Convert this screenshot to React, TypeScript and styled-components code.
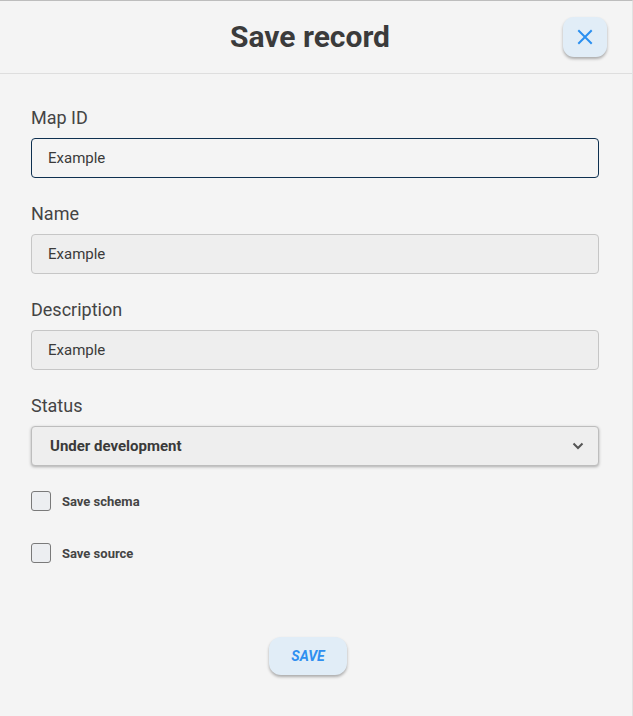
import React from "react";
import styled, { createGlobalStyle } from "styled-components";

const GlobalStyle = createGlobalStyle`
  html, body {
    margin: 0;
    padding: 0;
    background: #f4f4f4;
  }
  body {
    font-family: Roboto, "Liberation Sans", sans-serif;
  }
`;

const Dialog = styled.div`
  width: 633px;
  height: 716px;
  box-sizing: border-box;
  background: #f4f4f4;
  border-top: 1px solid #bdbdbd;
  border-right: 1px solid #e2e2e2;
  display: flex;
  flex-direction: column;
`;

const Header = styled.header`
  display: grid;
  grid-template-columns: 44px 1fr 44px;
  align-items: center;
  height: 72px;
  padding: 0 25px 0 13px;
  border-bottom: 1px solid #dedede;
`;

const Title = styled.h1`
  grid-column: 2;
  margin: 0 0 1px;
  text-align: center;
  font-size: 30px;
  font-weight: 700;
  color: #3b3b3b;
`;

const IconButton = styled.button`
  grid-column: 3;
  width: 44px;
  height: 40px;
  border: none;
  border-radius: 11px;
  background: #e1edf7;
  box-shadow: 0 2px 3px rgba(0, 0, 0, 0.3);
  display: flex;
  align-items: center;
  justify-content: center;
  padding: 0;
  cursor: pointer;
  margin-top: -1px;
`;

const Body = styled.div`
  display: flex;
  flex-direction: column;
  padding: 34px 33px 0 31px;
`;

const Field = styled.div`
  display: flex;
  flex-direction: column;
  margin-bottom: 26px;

  &:nth-of-type(4) {
    margin-bottom: 25px;
  }
`;

const Label = styled.label`
  font-size: 18px;
  line-height: 20px;
  color: #444;
  margin-bottom: 10px;
`;

const Input = styled.input<{ $focused?: boolean }>`
  box-sizing: border-box;
  height: 40px;
  width: 100%;
  padding: 0 16px;
  font-family: Roboto, "Liberation Sans", sans-serif;
  font-size: 15px;
  color: #3a3a3a;
  caret-color: #222;
  border-radius: 4px;
  outline: none;
  border: 1px solid ${(p) => (p.$focused ? "#0e3050" : "#c6c6c6")};
  background: ${(p) => (p.$focused ? "#f4f4f4" : "#eeeeee")};
`;

const Select = styled.div`
  box-sizing: border-box;
  height: 40px;
  display: flex;
  align-items: center;
  justify-content: space-between;
  padding: 0 14px 0 18px;
  border: 1px solid #bdbdbd;
  border-radius: 4px;
  background: #eeeeee;
  box-shadow: 0 1px 3px rgba(0, 0, 0, 0.3);
  font-size: 15px;
  font-weight: 700;
  color: #3a3a3a;
`;

const CheckRow = styled.label`
  display: flex;
  align-items: center;
  gap: 11px;
  height: 20px;
  margin-bottom: 32px;
  font-size: 13px;
  font-weight: 700;
  color: #444;
`;

const Box = styled.span`
  box-sizing: border-box;
  width: 20px;
  height: 20px;
  border: 1px solid #7a7a7a;
  border-radius: 3px;
  background: #eceef1;
`;

const Footer = styled.div`
  display: flex;
  justify-content: center;
  padding: 42px 16px 0 0;
  margin-left: -31px;
  margin-right: -33px;
`;

const SaveButton = styled.button`
  width: 78px;
  height: 38px;
  border: none;
  border-radius: 12px;
  background: #e1edf7;
  box-shadow: 0 2px 3px rgba(0, 0, 0, 0.3);
  color: #2f8ff0;
  font-family: Roboto, "Liberation Sans", sans-serif;
  font-size: 14px;
  font-weight: 700;
  font-style: italic;
  text-transform: uppercase;
  cursor: pointer;
`;

const App: React.FC = () => {
  return (
    <>
      <GlobalStyle />
      <Dialog>
        <Header>
          <Title>Save record</Title>
          <IconButton aria-label="Close">
            <svg width="16" height="16" viewBox="0 0 16 16">
              <path d="M2 2 L14 14 M14 2 L2 14" stroke="#2a8ff0" strokeWidth="2" strokeLinecap="square" />
            </svg>
          </IconButton>
        </Header>
        <Body>
          <Field>
            <Label>Map ID</Label>
            <Input $focused defaultValue="Example" autoFocus />
          </Field>
          <Field>
            <Label>Name</Label>
            <Input defaultValue="Example" disabled />
          </Field>
          <Field>
            <Label>Description</Label>
            <Input defaultValue="Example" disabled />
          </Field>
          <Field>
            <Label>Status</Label>
            <Select>
              <span>Under development</span>
              <svg width="12" height="8" viewBox="0 0 12 8">
                <path d="M1.5 1.5 L6 6 L10.5 1.5" fill="none" stroke="#555" strokeWidth="2" />
              </svg>
            </Select>
          </Field>
          <CheckRow>
            <Box />
            Save schema
          </CheckRow>
          <CheckRow>
            <Box />
            Save source
          </CheckRow>
          <Footer>
            <SaveButton>Save</SaveButton>
          </Footer>
        </Body>
      </Dialog>
    </>
  );
};

export default App;
